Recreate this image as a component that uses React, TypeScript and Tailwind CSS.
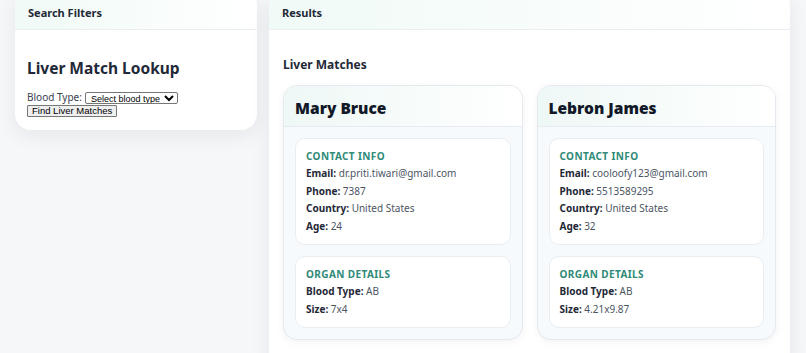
import React from "react";

interface Match {
  name: string;
  email: string;
  phone: string;
  country: string;
  age: number;
  bloodType: string;
  size: string;
}

const MATCHES: Match[] = [
  {
    name: "Mary Bruce",
    email: "dr.priti.tiwari@gmail.com",
    phone: "7387",
    country: "United States",
    age: 24,
    bloodType: "AB",
    size: "7x4",
  },
  {
    name: "Lebron James",
    email: "cooloofy123@gmail.com",
    phone: "5513589295",
    country: "United States",
    age: 32,
    bloodType: "AB",
    size: "4.21x9.87",
  },
];

function Row({ label, value }: { label: string; value: React.ReactNode }) {
  return (
    <p className="text-[10px] leading-[17.5px] text-[#4b5563]">
      <span className="font-bold text-[#1f2937]">{label}:</span> {value}
    </p>
  );
}

function Section({ title, children }: { title: string; children: React.ReactNode }) {
  return (
    <div className="rounded-[10px] border border-[#e8edf2] bg-white px-[10px] pt-[10px] pb-[9px]">
      <h4 className="text-[10px] leading-[14px] font-bold uppercase tracking-[0.04em] text-[#2f8a78]">
        {title}
      </h4>
      <div className="mt-[2px]">{children}</div>
    </div>
  );
}

function MatchCard({ m }: { m: Match }) {
  return (
    <div className="rounded-[14px] border border-[#e3e9ef] bg-[#f7fafc] shadow-[0_2px_8px_rgba(15,23,42,0.05)] overflow-hidden">
      <div className="px-[11px] pt-[10px] pb-[6px] border-b border-[#e6ecf1] bg-gradient-to-r from-[#eef8f6] to-white">
        <h3 className="text-[15.5px] leading-[24px] font-black text-[#111827]">{m.name}</h3>
      </div>
      <div className="px-[11px] pt-[11px] pb-[11px] flex flex-col gap-[11px]">
        <Section title="Contact Info">
          <Row label="Email" value={m.email} />
          <Row label="Phone" value={m.phone} />
          <Row label="Country" value={m.country} />
          <Row label="Age" value={m.age} />
        </Section>
        <Section title="Organ Details">
          <Row label="Blood Type" value={m.bloodType} />
          <Row label="Size" value={m.size} />
        </Section>
      </div>
    </div>
  );
}

function PanelHeader({ title }: { title: string }) {
  return (
    <div className="px-[13px] pt-[15px] pb-[8px] border-b border-[#e9eef2] bg-gradient-to-r from-[#f0faf7] to-white">
      <h2 className="text-[11px] leading-[16px] font-bold text-[#1f2937]">{title}</h2>
    </div>
  );
}

const systemFont = { fontFamily: '"Liberation Sans", Arial, sans-serif' };

export default function App() {
  return (
    <div
      className="h-[353px] w-[806px] overflow-hidden bg-[#f6f7f9]"
      style={{ fontFamily: '"Noto Sans", "Open Sans", sans-serif' }}
    >
      <div className="-mt-[10px] flex items-start gap-[12px] pl-[15px] pr-[16px]">
        <aside className="w-[242px] shrink-0 rounded-[16px] bg-white shadow-[0_6px_20px_rgba(15,23,42,0.07)] overflow-hidden">
          <PanelHeader title="Search Filters" />
          <div className="px-[12px] pt-[26px] pb-[13px]">
            <h2 className="text-[15.5px] leading-[24px] font-bold text-[#1f2937] mb-[10px]">
              Liver Match Lookup
            </h2>
            <div className="flex h-[15px] items-center text-[10px] leading-[15px] text-[#374151]">
              <label>Blood Type:</label>
              <select
                className="ml-[3px] h-[12px] w-[93px] border border-[#767676] rounded-[2px] bg-white p-0 pl-[1px] text-[9px] leading-[10px] text-black"
                style={systemFont}
                defaultValue=""
              >
                <option value="">Select blood type</option>
                <option value="A">A</option>
                <option value="B">B</option>
                <option value="AB">AB</option>
                <option value="O">O</option>
              </select>
            </div>
            <div className="flex h-[12px]">
              <button
                className="h-[12px] whitespace-nowrap border border-[#767676] rounded-[1px] bg-[#efefef] px-[4px] py-0 text-[9.5px] leading-[10px] text-black"
                style={systemFont}
              >
                Find Liver Matches
              </button>
            </div>
          </div>
        </aside>

        <main className="h-[380px] flex-1 rounded-[16px] bg-white shadow-[0_6px_20px_rgba(15,23,42,0.07)] overflow-hidden">
          <PanelHeader title="Results" />
          <div className="px-[14px] pt-[26px] pb-[20px]">
            <h3 className="text-[12px] leading-[18px] font-bold text-[#1f2937] mb-[11px]">
              Liver Matches
            </h3>
            <div className="grid grid-cols-2 gap-x-[14px] gap-y-[11px]">
              {MATCHES.map((m) => (
                <MatchCard key={m.name} m={m} />
              ))}
            </div>
          </div>
        </main>
      </div>
    </div>
  );
}
